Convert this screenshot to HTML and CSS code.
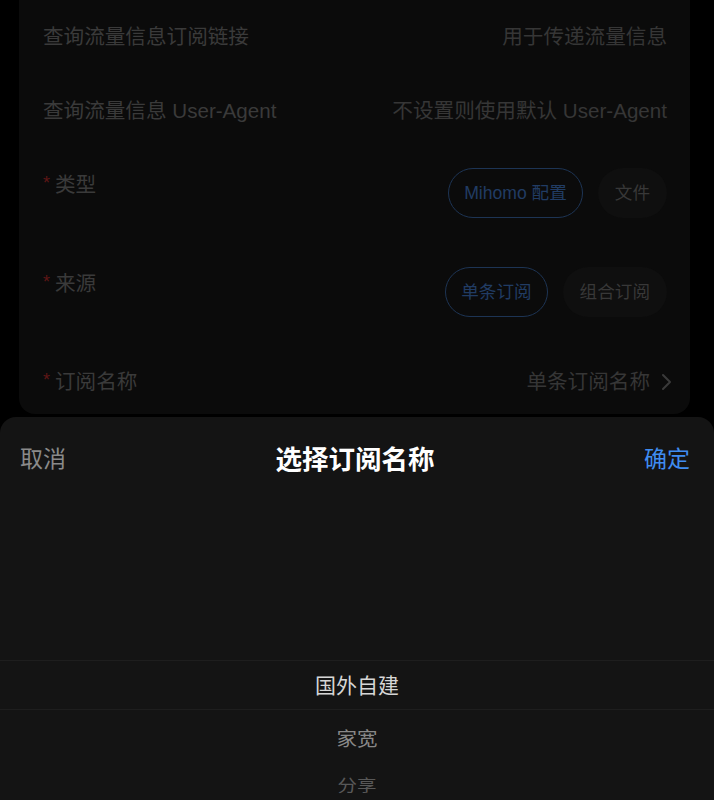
FILE: index.html
```html
<!DOCTYPE html>
<html lang="zh-CN">
<head>
  <meta charset="UTF-8">
  <meta name="viewport" content="width=device-width, initial-scale=1.0">
  <title>选择订阅名称</title>
  <link rel="stylesheet" href="styles.css">
</head>
<body>
  <div class="page">
    <!-- Form card behind the mask -->
    <div class="card">
      <div class="row">
        <span class="label">查询流量信息订阅链接</span>
        <span class="value">用于传递流量信息</span>
      </div>
      <div class="row">
        <span class="label">查询流量信息 User-Agent</span>
        <span class="value">不设置则使用默认 User-Agent</span>
      </div>
      <div class="row opts">
        <span class="label"><i class="req">*</i>类型</span>
        <div class="chips">
          <span class="chip active">Mihomo 配置</span>
          <span class="chip">文件</span>
        </div>
      </div>
      <div class="row opts">
        <span class="label"><i class="req">*</i>来源</span>
        <div class="chips">
          <span class="chip active">单条订阅</span>
          <span class="chip">组合订阅</span>
        </div>
      </div>
      <div class="row last">
        <span class="label"><i class="req">*</i>订阅名称</span>
        <span class="value link">单条订阅名称
          <svg class="chevron" viewBox="0 0 12 18" width="12" height="18"><path d="M3 2l7 7-7 7" fill="none" stroke="currentColor" stroke-width="2" stroke-linecap="round" stroke-linejoin="round"/></svg>
        </span>
      </div>
    </div>

    <!-- Picker sheet -->
    <div class="sheet">
      <div class="sheet-head">
        <span class="cancel">取消</span>
        <span class="sheet-title">选择订阅名称</span>
        <span class="confirm">确定</span>
      </div>
      <div class="wheel">
        <div class="wheel-item selected">国外自建</div>
        <div class="wheel-item near">家宽</div>
        <div class="wheel-item far">分享</div>
      </div>
    </div>
  </div>
</body>
</html>
```

FILE: styles.css
```css
body {
  margin: 0;
  background: #000;
  font-family: 'Liberation Sans', 'Noto Sans CJK SC', sans-serif;
  overflow: hidden;
  height: 800px;
}

.page {
  display: flex;
  flex-direction: column;
}

.card {
  margin: 0 24px 0 19px;
  background: #0b0b0b;
  border-radius: 0 0 16px 16px;
  height: 414px;
  box-sizing: border-box;
}

.row {
  display: flex;
  justify-content: space-between;
  align-items: flex-start;
  padding: 23px 23px 23px 24px;
}

.row.opts {
  padding-top: 20px;
  padding-bottom: 29px;
}

.row.opts .label {
  padding-top: 3px;
}

.row.last {
  padding-top: 22px;
}

.label,
.value {
  font-size: 20.6px;
  line-height: 28px;
  color: #3a3a3a;
  white-space: nowrap;
}

.value {
  color: #363636;
}

.req {
  font-style: normal;
  color: #5e1616;
  font-size: 18px;
  margin-right: 5px;
  position: relative;
  top: -3px;
}

.link {
  display: flex;
  align-items: center;
  gap: 10px;
}

.chevron {
  color: #3a3a3a;
  margin-right: -5px;
}

.chips {
  display: flex;
  gap: 15px;
}

.chip {
  display: inline-block;
  height: 50px;
  line-height: 48px;
  box-sizing: border-box;
  padding: 0 16px;
  border: 1px solid transparent;
  border-radius: 25px;
  background: #0f0f0f;
  color: #383838;
  font-size: 17.6px;
  white-space: nowrap;
}

.chip.active {
  padding: 0 15px;
  background: transparent;
  border-color: #1d3454;
  color: #213c63;
}

.sheet {
  margin-top: 3px;
  background: #141414;
  border-radius: 16px 16px 0 0;
  height: 400px;
}

.sheet-head {
  display: flex;
  justify-content: space-between;
  align-items: center;
  height: 80px;
  padding: 0 24px 0 20px;
}

.cancel,
.confirm {
  font-size: 23px;
  color: #8a8a8a;
}

.confirm {
  color: #3f8cf0;
}

.sheet-title {
  font-size: 26.5px;
  font-weight: bold;
  color: #fff;
}

.wheel {
  padding-top: 163px;
}

.wheel-item {
  height: 50px;
  line-height: 50px;
  text-align: center;
  font-size: 20.5px;
  color: #d6d6d6;
}

.wheel-item.selected {
  border-top: 1px solid #1e1e1e;
  border-bottom: 1px solid #1e1e1e;
  height: 48px;
  line-height: 50px;
  font-size: 21px;
}

.wheel-item.near {
  color: #888;
  transform: translateY(4px) scaleY(0.95);
}

.wheel-item.far {
  color: #585858;
  font-size: 19.5px;
  transform: translateY(0) scaleY(0.82);
}
```
